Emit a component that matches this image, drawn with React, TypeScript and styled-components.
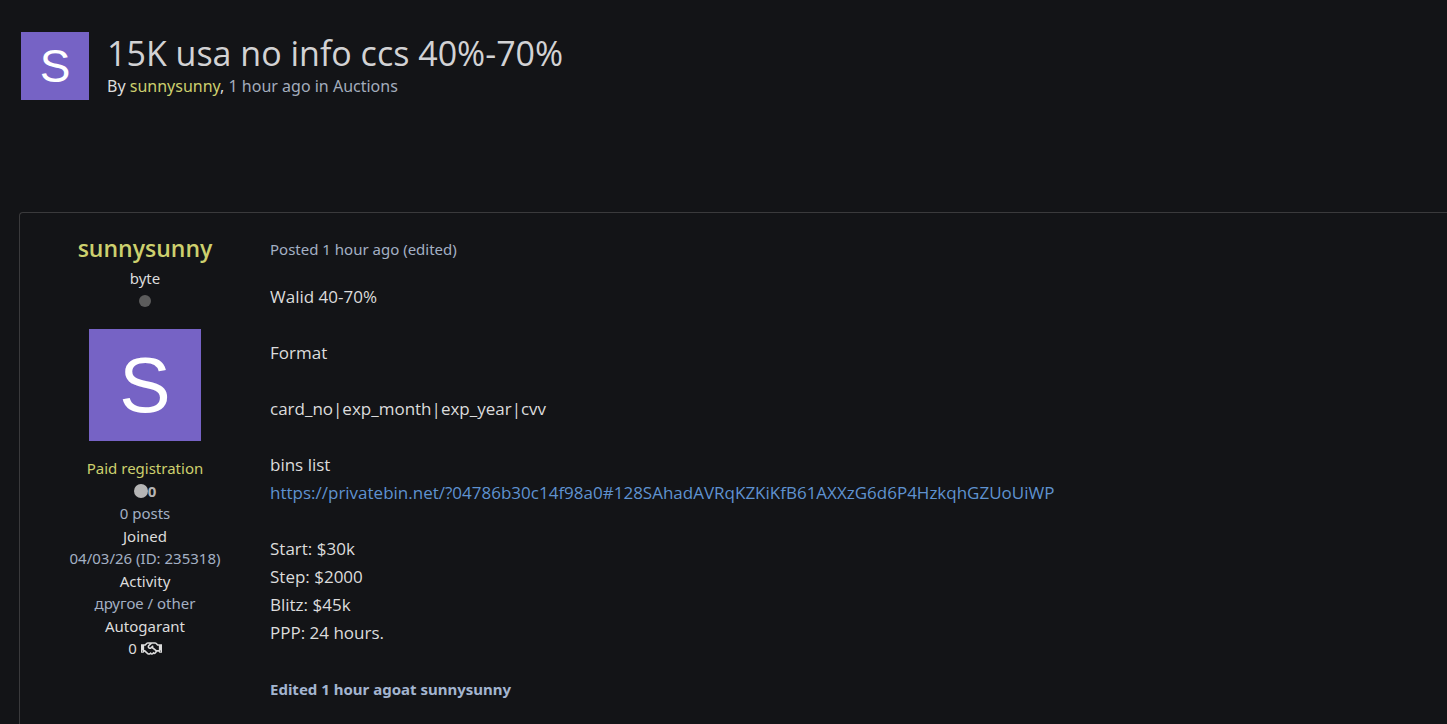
import React from "react";
import styled, { createGlobalStyle } from "styled-components";
import { FaRegHandshake } from "react-icons/fa";

const GlobalStyle = createGlobalStyle`
  *, *::before, *::after { box-sizing: border-box; }
  body {
    margin: 0;
    min-height: 100vh;
    background: #131417;
    color: #dcdcdc;
    font-family: "Noto Sans", "Open Sans", sans-serif;
    overflow-x: hidden;
  }
`;

const PageHeader = styled.header`
  display: flex;
  gap: 18px;
  padding: 32px 21px 0;
`;

const Avatar = styled.a<{ $size: number; $letter: number }>`
  display: flex;
  flex: none;
  align-items: center;
  justify-content: center;
  width: ${(p) => p.$size}px;
  height: ${(p) => p.$size}px;
  background: #7663c5;
  color: #fff;
  font: ${(p) => p.$letter}px/1 "Liberation Sans", sans-serif;
  text-decoration: none;
`;

const Title = styled.h1`
  margin: 0;
  font-family: "Open Sans", sans-serif;
  font-size: 34px;
  font-weight: 400;
  line-height: 42px;
  color: #d2d2d4;
`;

const Byline = styled.p`
  margin: 0;
  font-size: 16px;
  line-height: 24px;
  color: #a3adbd;
`;

const Lead = styled.span`
  color: #dcdcdc;
`;

const TextLink = styled.a<{ $tone?: string }>`
  color: ${(p) => p.$tone ?? "inherit"};
  text-decoration: none;
`;

const Post = styled.article`
  display: grid;
  grid-template-columns: 250px minmax(0, 1fr);
  margin: 112px 0 0 19px;
  padding-bottom: 40px;
  border: 1px solid #3a3a3c;
  border-right: 0;
  border-radius: 4px 0 0 0;
`;

const Author = styled.aside`
  display: flex;
  flex-direction: column;
  align-items: center;
  padding-top: 18px;
  font-size: 15px;
  line-height: 1.5;
`;

const AuthorName = styled.h2`
  margin: 0;
  font-family: "Open Sans", sans-serif;
  font-size: 23px;
  font-weight: 600;
  line-height: 34px;
`;

const Rank = styled.div`
  line-height: 26px;
`;

const Dot = styled.span<{ $size: number; $color: string }>`
  display: inline-block;
  width: ${(p) => p.$size}px;
  height: ${(p) => p.$size}px;
  border-radius: 50%;
  background: ${(p) => p.$color};
`;

const StatusRow = styled.div`
  display: flex;
  align-items: center;
  height: 20px;
  margin-bottom: 18px;
`;

const Details = styled.ul`
  margin: 16px 0 0;
  padding: 0;
  list-style: none;
  text-align: center;
`;

const Detail = styled.li<{ $muted?: boolean }>`
  display: flex;
  align-items: center;
  justify-content: center;
  gap: 4px;
  color: ${(p) => (p.$muted ? "#a3b0c4" : "#dcdcdc")};
`;

const Reputation = styled(Detail)`
  gap: 0;
  color: #b5b5b5;
  font-weight: 700;
`;

const Content = styled.div`
  padding: 25px 20px 0 0;
`;

const PostMeta = styled.div`
  font-size: 15px;
  line-height: 22px;
  color: #a3b0c4;
`;

const Body = styled.div`
  margin-top: 23px;
  font-family: "Open Sans", sans-serif;
  font-size: 17px;
  line-height: 28px;

  p {
    margin: 0 0 28px;
  }
`;

const Edited = styled.div`
  font-size: 15px;
  font-weight: 700;
  line-height: 28px;
  color: #a3b5d0;
`;

const YELLOW = "#cdd06e";

export default function App() {
  return (
    <>
      <GlobalStyle />
      <PageHeader>
        <Avatar href="#profile" $size={68} $letter={46}>S</Avatar>
        <div>
          <Title>15K usa no info ccs 40%-70%</Title>
          <Byline>
            <Lead>By <TextLink href="#profile" $tone={YELLOW}>sunnysunny</TextLink>,</Lead>{" "}
            1 hour ago in <TextLink href="#auctions">Auctions</TextLink>
          </Byline>
        </div>
      </PageHeader>
      <main>
        <Post>
          <Author>
            <AuthorName>
              <TextLink href="#profile" $tone={YELLOW}>sunnysunny</TextLink>
            </AuthorName>
            <Rank>byte</Rank>
            <StatusRow><Dot $size={12} $color="#5c5c5c" /></StatusRow>
            <Avatar href="#profile" $size={112} $letter={77}>S</Avatar>
            <Details>
              <Detail><TextLink as="span" $tone={YELLOW}>Paid registration</TextLink></Detail>
              <Reputation><Dot $size={14} $color="#b5b5b5" />0</Reputation>
              <Detail $muted>0 posts</Detail>
              <Detail>Joined</Detail>
              <Detail $muted>04/03/26 (ID: 235318)</Detail>
              <Detail>Activity</Detail>
              <Detail $muted>другое / other</Detail>
              <Detail>Autogarant</Detail>
              <Detail>0 <FaRegHandshake size={21} /></Detail>
            </Details>
          </Author>
          <Content>
            <PostMeta>Posted 1 hour ago (edited)</PostMeta>
            <Body>
              <p>Walid 40-70%</p>
              <p>Format</p>
              <p>card_no|exp_month|exp_year|cvv</p>
              <p>
                bins list<br />
                <TextLink href="#bins" $tone="#5f92d0">
                  https://privatebin.net/?04786b30c14f98a0#128SAhadAVRqKZKiKfB61AXXzG6d6P4HzkqhGZUoUiWP
                </TextLink>
              </p>
              <p>
                Start: $30k<br />
                Step: $2000<br />
                Blitz: $45k<br />
                PPP: 24 hours.
              </p>
            </Body>
            <Edited>Edited 1 hour agoat sunnysunny</Edited>
          </Content>
        </Post>
      </main>
    </>
  );
}
